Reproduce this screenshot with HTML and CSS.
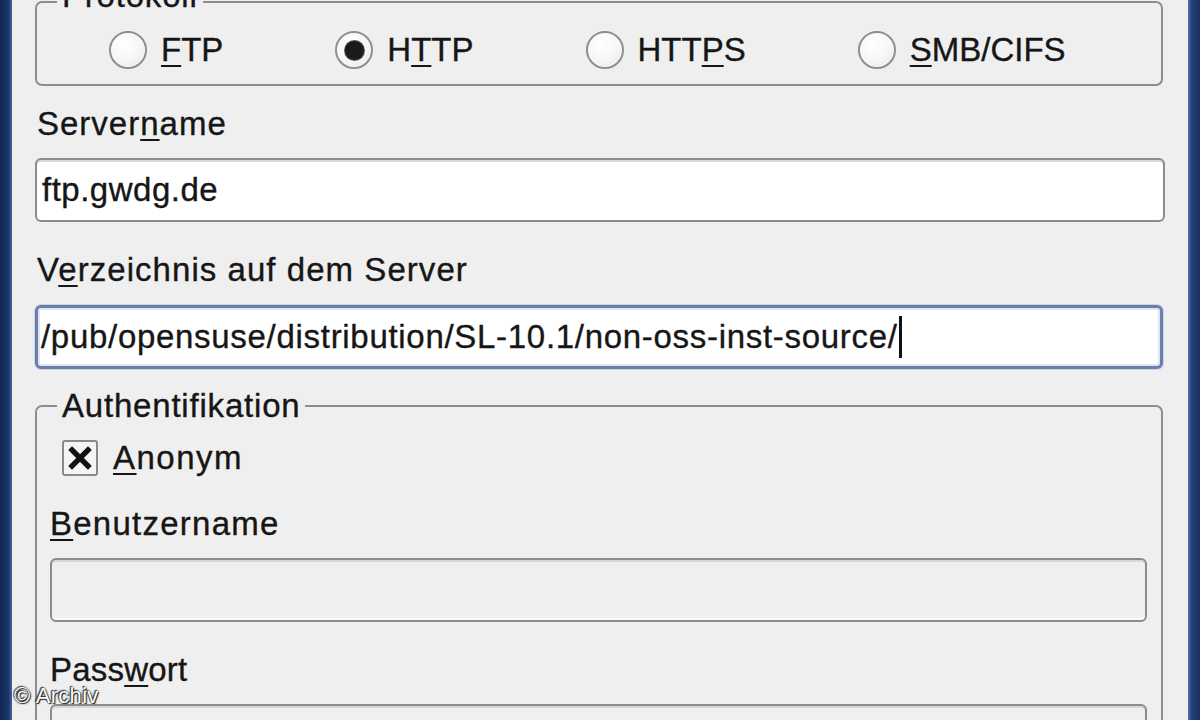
FILE: index.html
```html
<!DOCTYPE html>
<html lang="de">
<head>
<meta charset="utf-8">
<title>Medium hinzufügen</title>
<link rel="stylesheet" href="styles.css">
</head>
<body>
<div class="screen">
  <div class="bar bar-left"></div>
  <main class="dialog">
    <fieldset class="group group-proto">
      <legend class="legend legend-proto">Protokoll</legend>
      <div class="radios">
        <label class="radio"><span class="radio-dot"></span><span class="radio-text"><u>F</u>TP</span></label>
        <label class="radio"><span class="radio-dot is-checked"></span><span class="radio-text">H<u>T</u>TP</span></label>
        <label class="radio"><span class="radio-dot"></span><span class="radio-text">HTT<u>P</u>S</span></label>
        <label class="radio"><span class="radio-dot"></span><span class="radio-text"><u>S</u>MB/CIFS</span></label>
      </div>
    </fieldset>

    <div class="label label-server">Server<u>n</u>ame</div>
    <div class="field field-server"><span class="field-text t-server">ftp.gwdg.de</span></div>

    <div class="label label-dir">V<u>e</u>rzeichnis auf dem Server</div>
    <div class="field field-focus"><span class="field-text t-dir">/pub/opensuse/distribution/SL-10.1/non-oss-inst-source/</span><span class="caret"></span></div>

    <fieldset class="group group-auth">
      <legend class="legend legend-auth">Authentifikation</legend>
      <div class="check-row">
        <span class="checkbox">
          <svg viewBox="0 0 36 36" width="32" height="32"><path d="M9 9 L27 27 M27 9 L9 27" stroke="#111" stroke-width="6" stroke-linecap="square" fill="none"/></svg>
        </span>
        <span class="check-text"><u>A</u>nonym</span>
      </div>
      <div class="label label-user"><u>B</u>enutzername</div>
      <div class="field field-disabled"></div>
      <div class="label label-pass">Pass<u>w</u>ort</div>
      <div class="field field-disabled"></div>
    </fieldset>
  </main>
  <div class="bar bar-right"></div>
  <div class="watermark">© Archiv</div>
</div>
</body>
</html>
```

FILE: styles.css
```css
html, body {
  margin: 0;
  padding: 0;
  background: #efefef;
}

.screen {
  position: relative;
  width: 1200px;
  height: 720px;
  overflow: hidden;
  display: flex;
  font-family: "Liberation Sans", Arial, sans-serif;
  font-size: 33px;
  line-height: 38px;
  color: #161616;
  -webkit-text-stroke: 0.35px #161616;
}

.bar {
  width: 12px;
  flex: none;
}

.bar-left {
  background: linear-gradient(to right, #132654 0%, #1c366b 70%, #47649b 100%);
}

.bar-right {
  background: linear-gradient(to right, #5673a8 0%, #22407a 30%, #17305f 100%);
}

.dialog {
  flex: 1;
  padding: 0 25px 0 23px;
  background: #efefef;
}

u {
  text-decoration: underline;
  text-decoration-thickness: 2px;
  text-underline-offset: 4px;
}

/* group boxes */
.group {
  margin: 0;
  padding: 0 14px 15px 13px;
  border: 2px solid #8d8d8d;
  border-radius: 7px;
  min-inline-size: 0;
}

.group-proto {
  margin-top: -23px;
  padding-top: 4px;
}

.group-auth {
  margin-top: 18px;
  padding-bottom: 60px;
}

.legend {
  margin-left: 7px;
  padding: 0 5px;
  line-height: 38px;
  letter-spacing: 0.8px;
}

.legend-proto {
  padding-bottom: 12px;
}

/* radios */
.radios {
  display: flex;
  align-items: center;
  gap: 112px;
  padding-left: 59px;
  height: 38px;
}

.radio {
  display: flex;
  align-items: center;
  gap: 14px;
}

.radio-dot {
  width: 34px;
  height: 34px;
  border: 2px solid #8f8f8f;
  border-radius: 50%;
  background: radial-gradient(circle at 40% 35%, #ffffff 0%, #f6f6f6 55%, #dedede 100%);
  box-shadow: inset 0 0 0 1px #fbfbfb;
  display: flex;
  align-items: center;
  justify-content: center;
}

.radio-dot.is-checked::after {
  content: "";
  width: 19px;
  height: 19px;
  border-radius: 50%;
  background: #1a1a1a;
  box-shadow: 0 0 0 1px #555;
}

/* labels */
.label {
  margin-left: 2px;
  letter-spacing: 1px;
}

.label-server { margin-top: 19px; }
.label-dir { margin-top: 29px; letter-spacing: 1.05px; }
.label-user { margin-top: 28px; margin-left: 0; letter-spacing: 1.25px; }
.label-pass { margin-top: 29px; margin-left: 0; letter-spacing: 0.2px; }

/* text fields */
.field {
  box-sizing: border-box;
  height: 64px;
  margin-top: 15px;
  border: 2px solid #8c8c8c;
  border-radius: 6px;
  background: #ffffff;
  box-shadow: inset 0 2px 0 #d8d8d8;
  display: flex;
  align-items: center;
  padding: 0 5px;
  white-space: nowrap;
}

.field-server {
  margin-right: -2px;
}

.field-focus {
  margin-top: 16px;
  border: 3px solid #6d7fa6;
  box-shadow: inset 0 0 0 2px #dfe6f3, 0 0 0 1px #c9d3e8;
  padding: 0 3px;
}

.field-disabled {
  background: #efefef;
  box-shadow: inset 0 2px 0 #d6d6d6, inset 0 -2px 0 #fafafa;
}

.field-text {
  line-height: 38px;
}

.t-server { letter-spacing: 0.5px; }
.t-dir { letter-spacing: 0.7px; }

.caret {
  display: inline-block;
  width: 3px;
  height: 42px;
  background: #111;
  margin-left: 1px;
}

/* checkbox */
.check-row {
  display: flex;
  align-items: center;
  gap: 15px;
  margin-top: 14px;
  margin-left: 12px;
  height: 38px;
}

.checkbox {
  box-sizing: border-box;
  width: 36px;
  height: 36px;
  border: 2px solid #8a8a8a;
  border-radius: 3px;
  background: #f4f4f4;
  display: flex;
  align-items: center;
  justify-content: center;
}

.check-text {
  letter-spacing: 1.5px;
}

/* watermark overlay */
.watermark {
  position: absolute;
  left: 14px;
  top: 683px;
  font-size: 22px;
  line-height: 26px;
  color: #ffffff;
  -webkit-text-stroke: 0;
  letter-spacing: 0.3px;
  text-shadow: 0 0 2px #000, 1px 1px 1px #222, -1px -1px 1px #444;
}
```
